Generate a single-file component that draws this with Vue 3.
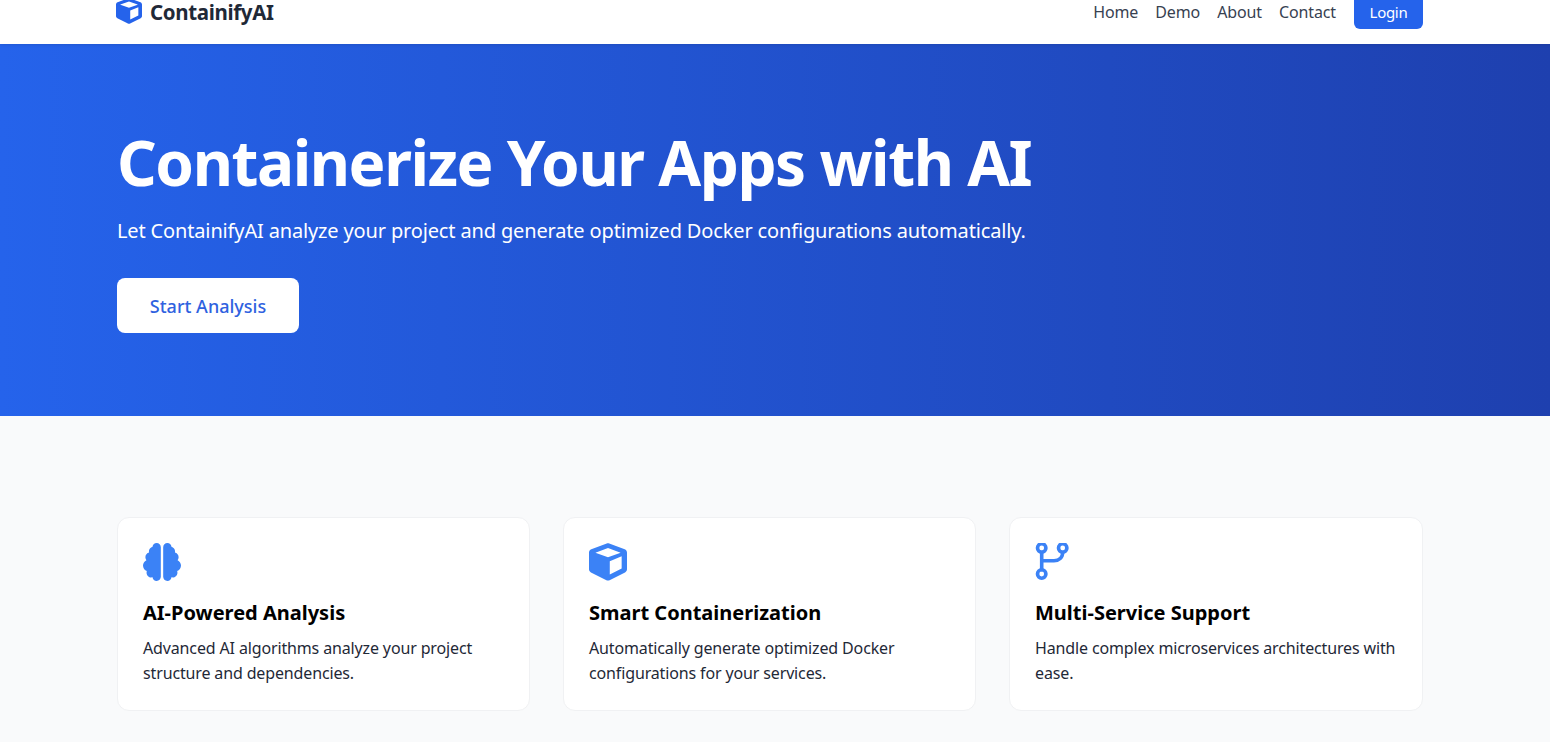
<template>
  <div class="page">
    <header class="topbar">
      <div class="wrap topbar-row">
        <a class="brand">
          <svg class="brand-icon" viewBox="0 0 512 512"><path :d="cubePath" /></svg>
          <span>ContainifyAI</span>
        </a>
        <nav class="nav">
          <a v-for="link in links" :key="link">{{ link }}</a>
          <button class="login">Login</button>
        </nav>
      </div>
    </header>

    <section class="hero">
      <div class="wrap">
        <h1>Containerize Your Apps with AI</h1>
        <p>Let ContainifyAI analyze your project and generate optimized Docker configurations automatically.</p>
        <button class="start">Start Analysis</button>
      </div>
    </section>

    <section class="features">
      <div class="wrap grid">
        <div class="card">
          <svg class="icon" viewBox="0 0 512 512"><path :d="brainPath" /></svg>
          <h3>AI-Powered Analysis</h3>
          <p>Advanced AI algorithms analyze your project structure and dependencies.</p>
        </div>
        <div class="card">
          <svg class="icon" viewBox="0 0 512 512"><path :d="cubePath" /></svg>
          <h3>Smart Containerization</h3>
          <p>Automatically generate optimized Docker configurations for your services.</p>
        </div>
        <div class="card">
          <svg class="icon" viewBox="0 0 38 38">
            <g class="branch">
              <circle cx="6.7" cy="5" r="4.2" />
              <circle cx="27.7" cy="5" r="4.2" />
              <circle cx="6.7" cy="31" r="4.2" />
              <path d="M6.7 9.2V26.8M6.7 17.7H19C24 17.7 27.7 14.5 27.7 9.2" />
            </g>
          </svg>
          <h3>Multi-Service Support</h3>
          <p>Handle complex microservices architectures with ease.</p>
        </div>
      </div>
    </section>
  </div>
</template>

<script setup>
const links = ['Home', 'Demo', 'About', 'Contact']

const cubePath = 'M239.1 6.3l-208 78c-18.7 7-31.1 25-31.1 45v225.1c0 18.2 10.3 34.8 26.5 42.9l208 104c13.5 6.8 29.4 6.8 42.9 0l208-104c16.3-8.1 26.5-24.8 26.5-42.9V129.3c0-20-12.4-37.9-31.1-44.9l-208-78C262 2.2 250 2.2 239.1 6.3zM256 68.4l170 62v1.1l-170 62-170-62v-1.1l170-62zm24 356V245l160-65v164.4l-160 80z'
const brainPath = 'M184 0c30.9 0 56 25.1 56 56V456c0 30.9-25.1 56-56 56c-28.9 0-52.7-21.9-55.7-50.1c-5.2 1.4-10.7 2.1-16.3 2.1c-35.3 0-64-28.7-64-64c0-7.4 1.3-14.6 3.6-21.2C21.4 367.4 0 338.2 0 304c0-31.9 18.7-59.5 45.8-72.3C37.1 220.8 32 207 32 192c0-30.7 21.6-56.3 50.4-62.6C80.8 123.9 80 118 80 112c0-29.9 20.6-55.1 48.3-62.1C131.3 21.9 155.1 0 184 0zM328 0c28.9 0 52.6 21.9 55.7 49.9c27.8 7 48.3 32.1 48.3 62.1c0 6-.8 11.9-2.4 17.4c28.8 6.2 50.4 31.9 50.4 62.6c0 15-5.1 28.8-13.8 39.7C493.3 244.5 512 272.1 512 304c0 34.2-21.4 63.4-51.6 74.8c2.3 6.6 3.6 13.8 3.6 21.2c0 35.3-28.7 64-64 64c-5.6 0-11.1-.7-16.3-2.1c-3 28.2-26.8 50.1-55.7 50.1c-30.9 0-56-25.1-56-56V56c0-30.9 25.1-56 56-56z'
</script>

<style>
html, body {
  overflow: hidden;
  background: #f9fafb;
}
</style>

<style scoped>
.page {
  height: 742px;
  overflow: hidden;
  font-family: "Noto Sans", "Open Sans", sans-serif;
  color: #000;
}

.wrap {
  width: 1306px;
  margin-left: 117px;
}

.topbar {
  position: relative;
  height: 44px;
  background: #fff;
  box-shadow: 0 1px 3px rgba(0, 0, 0, 0.1);
}

.topbar-row {
  display: flex;
  justify-content: space-between;
  align-items: center;
  height: 24px;
}

.brand {
  display: flex;
  align-items: center;
  gap: 8px;
  font-size: 20.5px;
  line-height: 24px;
  font-weight: 700;
  color: #1f2937;
  letter-spacing: -0.35px;
}

.brand-icon {
  width: 26px;
  height: 26px;
  margin-top: -3px;
  margin-left: -1px;
  fill: #2563eb;
}

.nav {
  display: flex;
  align-items: center;
  gap: 17px;
  font-size: 16px;
  letter-spacing: -0.12px;
  color: #374151;
}

.login {
  width: 69px;
  height: 34px;
  margin: -5px 0 -5px 1px;
  border: 0;
  border-radius: 6px;
  background: #2563eb;
  color: #fff;
  font: inherit;
  font-size: 15px;
  letter-spacing: -0.3px;
}

.hero {
  height: 372px;
  box-sizing: border-box;
  padding-top: 81px;
  background: linear-gradient(90deg, #2563eb, #1e40af);
  color: #fff;
}

.hero h1 {
  margin: 0;
  font-size: 62px;
  line-height: 74px;
  letter-spacing: -1.45px;
  font-weight: 700;
}

.hero p {
  margin: 17px 0 0;
  font-size: 20px;
  line-height: 30px;
  letter-spacing: -0.15px;
}

.start {
  display: block;
  width: 182px;
  height: 55px;
  margin-top: 32px;
  border: 0;
  border-radius: 8px;
  background: #fff;
  color: #2f62e0;
  font: inherit;
  font-size: 18px;
  letter-spacing: 0;
  font-weight: 500;
}

.features {
  padding-top: 101px;
}

.grid {
  display: grid;
  grid-template-columns: 413px 413px 414px;
  gap: 33px;
}

.card {
  height: 194px;
  box-sizing: border-box;
  padding: 25px;
  background: #fff;
  border: 1px solid #f0f1f3;
  border-radius: 12px;
}

.icon {
  display: block;
  width: 38px;
  height: 38px;
  fill: #3b82f6;
}

.branch {
  fill: none;
  stroke: #3b82f6;
  stroke-width: 3.6;
  stroke-linecap: round;
}

.card h3 {
  margin: 17px 0 0;
  font-size: 20px;
  line-height: 30px;
  font-weight: 700;
}

.card p {
  margin: 8px 0 0;
  font-size: 16px;
  line-height: 25px;
  letter-spacing: -0.14px;
  color: #1f2937;
}
</style>
